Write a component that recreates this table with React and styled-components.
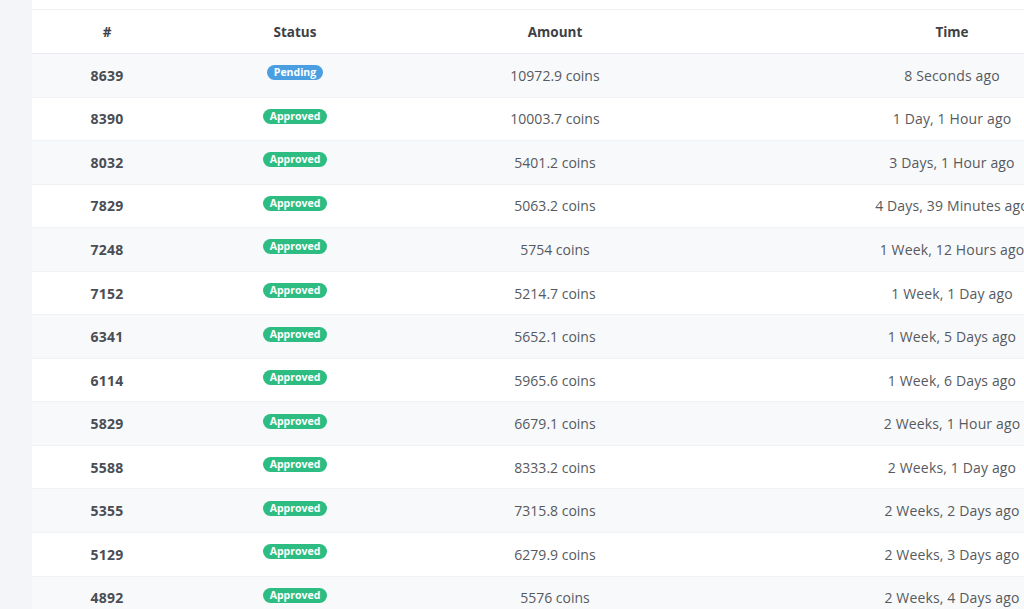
import React from 'react';
import styled, { createGlobalStyle } from 'styled-components';

const GlobalStyle = createGlobalStyle`
  html, body {
    margin: 0;
    padding: 0;
    background: #f4f5f9;
    font-family: "Open Sans", "Liberation Sans", sans-serif;
    overflow: hidden;
  }
`;

const Page = styled.div`
  display: flex;
  width: 1024px;
  height: 609px;
  overflow: hidden;
  background: #f4f5f9;
`;

const Gutter = styled.div`
  flex: 0 0 32px;
  background: #f4f5f9;
`;

const Card = styled.div`
  flex: 0 0 1174px;
  background: #ffffff;
  padding-top: 9px;
`;

const Table = styled.div`
  display: flex;
  flex-direction: column;
  border-top: 1px solid #eef0f3;
`;

const Row = styled.div`
  display: grid;
  grid-template-columns: 150px 226px 294px 500px;
  align-items: center;
  height: ${(p) => (p.$head ? '44px' : '43.55px')};
  box-sizing: border-box;
  background: ${(p) => (p.$striped ? '#f8f9fb' : '#ffffff')};
  border-bottom: 1px solid ${(p) => (p.$head ? '#e9ebef' : '#f1f2f5')};
`;

const Cell = styled.div`
  text-align: center;
  font-size: ${(p) => (p.$head ? '13.5px' : '14px')};
  font-weight: ${(p) => (p.$head || p.$bold ? 700 : 400)};
  color: ${(p) => (p.$head ? '#3d4146' : p.$bold ? '#4a4e54' : '#565a60')};
  white-space: nowrap;
  letter-spacing: ${(p) => (p.$wide ? '0.15px' : p.$bold ? '0.2px' : '0')};
`;

const StatusCell = styled.div`
  display: flex;
  justify-content: center;
  padding-bottom: 5px;
`;

const Badge = styled.span`
  display: inline-block;
  padding: 0 7px;
  height: 15px;
  line-height: 15px;
  border-radius: 8px;
  font-size: 10.5px;
  font-weight: 700;
  color: #ffffff;
  background: ${(p) => (p.$status === 'Pending' ? '#4a9fe3' : '#2dbd82')};
`;

const rows = [
  [8639, 'Pending', '10972.9 coins', '8 Seconds ago'],
  [8390, 'Approved', '10003.7 coins', '1 Day, 1 Hour ago'],
  [8032, 'Approved', '5401.2 coins', '3 Days, 1 Hour ago'],
  [7829, 'Approved', '5063.2 coins', '4 Days, 39 Minutes ago'],
  [7248, 'Approved', '5754 coins', '1 Week, 12 Hours ago'],
  [7152, 'Approved', '5214.7 coins', '1 Week, 1 Day ago'],
  [6341, 'Approved', '5652.1 coins', '1 Week, 5 Days ago'],
  [6114, 'Approved', '5965.6 coins', '1 Week, 6 Days ago'],
  [5829, 'Approved', '6679.1 coins', '2 Weeks, 1 Hour ago'],
  [5588, 'Approved', '8333.2 coins', '2 Weeks, 1 Day ago'],
  [5355, 'Approved', '7315.8 coins', '2 Weeks, 2 Days ago'],
  [5129, 'Approved', '6279.9 coins', '2 Weeks, 3 Days ago'],
  [4892, 'Approved', '5576 coins', '2 Weeks, 4 Days ago'],
];

export default function App() {
  return (
    <Page>
      <GlobalStyle />
      <Gutter />
      <Card>
        <Table>
          <Row $head>
            <Cell $head>#</Cell>
            <Cell $head>Status</Cell>
            <Cell $head>Amount</Cell>
            <Cell $head>Time</Cell>
          </Row>
          {rows.map(([id, status, amount, time], i) => (
            <Row key={id} $striped={i % 2 === 0}>
              <Cell $bold>{id}</Cell>
              <StatusCell>
                <Badge $status={status}>{status}</Badge>
              </StatusCell>
              <Cell>{amount}</Cell>
              <Cell $wide>{time}</Cell>
            </Row>
          ))}
        </Table>
      </Card>
    </Page>
  );
}
